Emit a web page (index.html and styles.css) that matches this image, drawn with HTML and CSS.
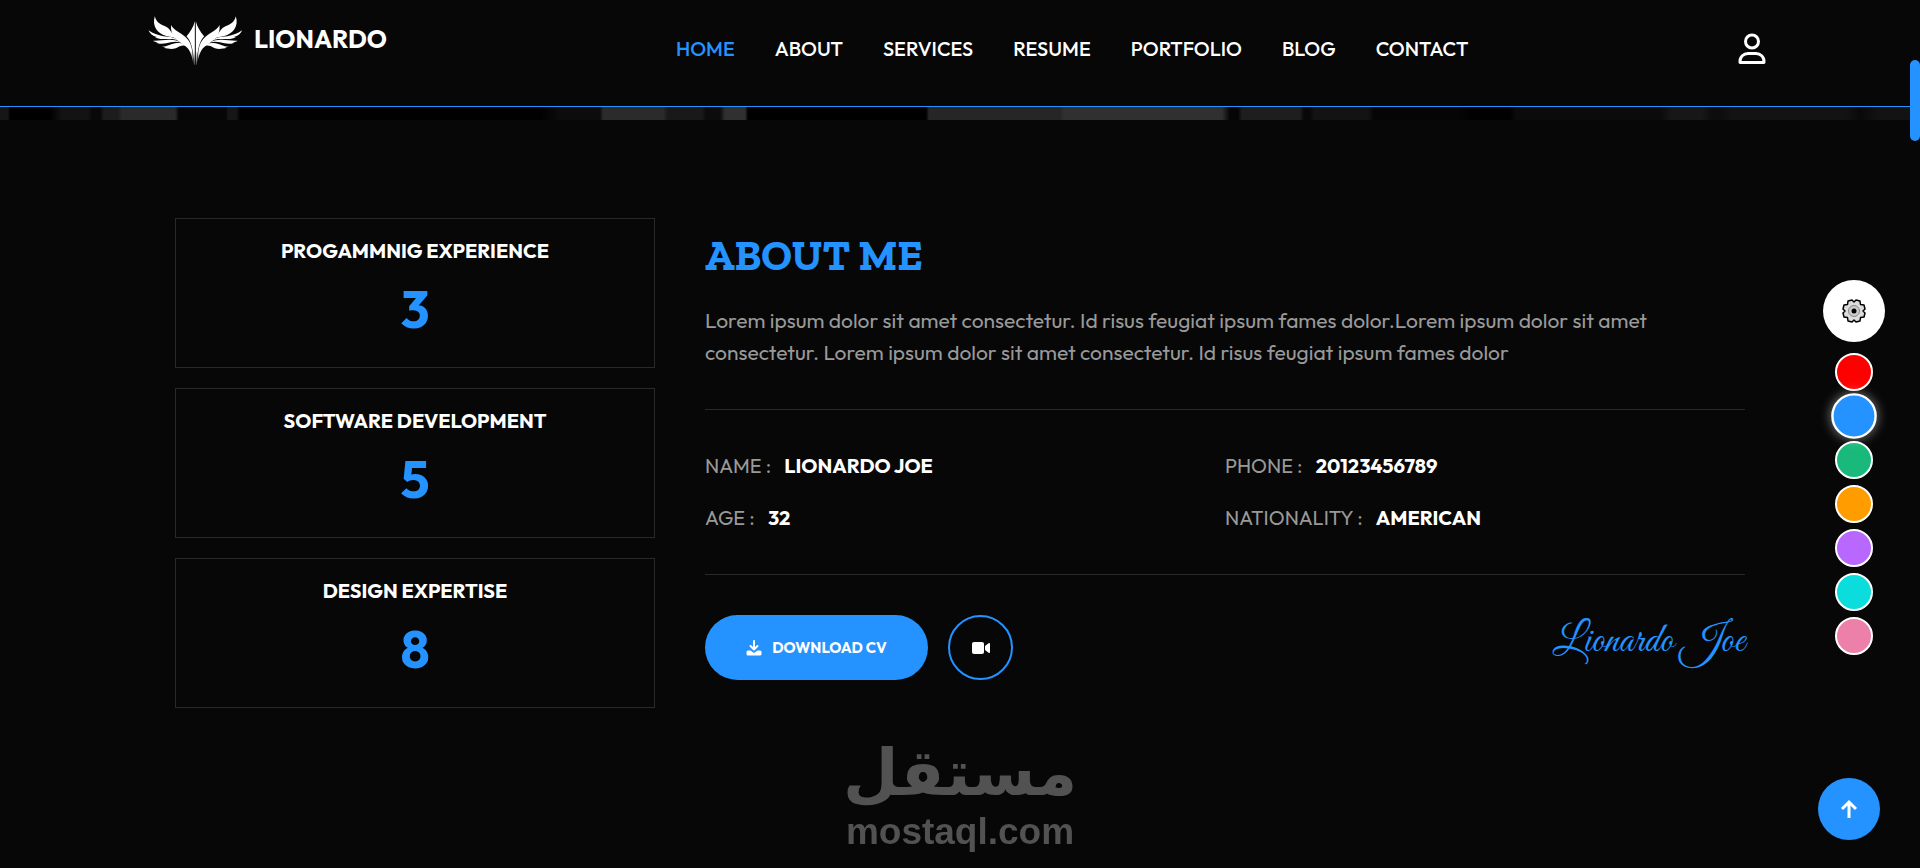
FILE: index.html
```html
<!DOCTYPE html>
<html lang="en">
<head>
  <meta charset="UTF-8">
  <meta name="viewport" content="width=device-width, initial-scale=1.0">
  <title>Lionardo</title>
  <link rel="stylesheet" href="styles.css">
</head>
<body>
  <header class="header">
    <div class="header-inner">
      <a href="#" class="logo">
        <svg class="logo-icon" viewBox="52 50 284 150" aria-hidden="true">
          <defs>
            <linearGradient id="fade" x1="0" y1="50" x2="0" y2="200" gradientUnits="userSpaceOnUse">
              <stop offset="0.7" stop-color="#fff"/>
              <stop offset="1" stop-color="#fff" stop-opacity="0.2"/>
            </linearGradient>
            <g id="wing">
              <path d="M72 51C76 68 88 76 103 81C115 86 118 95 125 103C137 112 145 118 153 128C136 112 121 114 104 109C83 104 62 83 72 51Z"/>
              <path d="M53 93C67 103 81 108 98 111C119 113 130 113 141 123C124 116 113 120 98 119C84 119 80 116 72 115L78 113C65 111 57 103 53 93Z"/>
              <path d="M67 124C88 125 107 119 125 122C137 122 143 126 150 130C132 124 119 130 106 132C89 135 81 132 76 130L82 129C75 128 70 127 67 124Z"/>
              <path d="M93 142C111 142 121 132 139 131C155 130 169 134 176 145C159 135 151 138 141 144C128 152 111 148 99 145L105 144Z"/>
              <path d="M121 77C129 94 148 99 163 112C181 128 185 144 187 190C181 157 173 145 155 134C139 123 117 110 121 77Z"/>
              <path d="M192 66C188 83 178 98 167 111C181 127 187 146 189 196L192 196Z"/>
            </g>
          </defs>
          <g fill="url(#fade)">
            <use href="#wing"/>
            <use href="#wing" transform="translate(387 0) scale(-1 1)"/>
          </g>
        </svg>
        <span>LIONARDO</span>
      </a>

      <nav class="nav">
        <a href="#" class="active">HOME</a>
        <a href="#about">ABOUT</a>
        <a href="#">SERVICES</a>
        <a href="#">RESUME</a>
        <a href="#">PORTFOLIO</a>
        <a href="#">BLOG</a>
        <a href="#">CONTACT</a>
      </nav>

      <a href="#" class="user" aria-label="Account">
        <svg width="28" height="32" viewBox="0 0 28 32" fill="none" stroke="#fff" stroke-width="3">
          <circle cx="14" cy="8.500" r="6.500"/>
          <path d="M2 29.500C1.500 23.500 6 20.500 10 20.500H18C22 20.500 26.500 23.500 26 29.500Z" stroke-linejoin="round"/>
        </svg>
      </a>
    </div>
  </header>

  <main>
    <div class="hero-strip"></div>

    <section class="about" id="about">
      <div class="stats">
        <div class="stat">
          <h3>PROGAMMNIG EXPERIENCE</h3>
          <p>3</p>
        </div>
        <div class="stat">
          <h3>SOFTWARE DEVELOPMENT</h3>
          <p>5</p>
        </div>
        <div class="stat">
          <h3>DESIGN EXPERTISE</h3>
          <p>8</p>
        </div>
      </div>

      <div class="about-text">
        <h2>ABOUT ME</h2>
        <p class="intro">Lorem ipsum dolor sit amet consectetur. Id risus feugiat ipsum fames dolor.Lorem ipsum dolor sit amet consectetur. Lorem ipsum dolor sit amet consectetur. Id risus feugiat ipsum fames dolor</p>

        <ul class="info">
          <li>NAME : <strong>LIONARDO JOE</strong></li>
          <li>PHONE : <strong>20123456789</strong></li>
          <li>AGE : <strong>32</strong></li>
          <li>NATIONALITY : <strong>AMERICAN</strong></li>
        </ul>

        <div class="actions">
          <button type="button" class="btn-download">
            <svg width="16" height="16" viewBox="0 0 16 16" aria-hidden="true">
              <path d="M8 1V9M4.500 6L8 9.500L11.500 6" fill="none" stroke="#fff" stroke-width="2" stroke-linecap="round" stroke-linejoin="round"/>
              <path d="M2 10.500H4.500L8 13L11.500 10.500H14A1.500 1.500 0 0 1 15.500 12V14A1.500 1.500 0 0 1 14 15.500H2A1.500 1.500 0 0 1 .5 14V12A1.500 1.500 0 0 1 2 10.500Z" fill="#fff"/>
            </svg>
            DOWNLOAD CV
          </button>
          <button type="button" class="btn-video" aria-label="Play video">
            <svg width="18" height="12" viewBox="0 0 18 12" fill="#fff">
              <rect width="12" height="12" rx="2"/>
              <path d="M13 4L16.500 1.200Q18 .5 18 2V10Q18 11.500 16.500 10.800L13 8Z"/>
            </svg>
          </button>
          <span class="signature">Lionardo Joe</span>
        </div>
      </div>
    </section>
  </main>

  <div class="watermark">
    <span class="watermark-ar" lang="ar" dir="rtl">مستقل</span>
    <span class="watermark-en">mostaql.com</span>
  </div>

  <aside class="theme">
    <button type="button" class="theme-toggle" aria-label="Settings">
      <svg width="24" height="24" viewBox="0 0 24 24">
        <path d="M10 1L12 3L14 1L18 2L18.500 5.500L22 6L23 10L21 12L23 14L22 18L18.500 18.500L18 22L14 23L12 21L10 23L6 22L5.500 18.500L2 18L1 14L3 12L1 10L2 6L5.500 5.500L6 2Z" fill="#ddd" stroke="#000" stroke-width="1.500" stroke-linejoin="round"/>
        <circle cx="12" cy="12" r="5.500" fill="#ccc" stroke="#888"/>
        <circle cx="12" cy="12" r="2.500"/>
      </svg>
    </button>
    <div class="colors">
      <button type="button" class="color red" aria-label="Red"></button>
      <button type="button" class="color blue selected" aria-label="Blue"></button>
      <button type="button" class="color green" aria-label="Green"></button>
      <button type="button" class="color orange" aria-label="Orange"></button>
      <button type="button" class="color purple" aria-label="Purple"></button>
      <button type="button" class="color cyan" aria-label="Cyan"></button>
      <button type="button" class="color pink" aria-label="Pink"></button>
    </div>
  </aside>

  <a href="#" class="to-top" aria-label="Back to top">
    <svg width="18" height="20" viewBox="0 0 18 20" fill="none" stroke="#fff" stroke-width="3">
      <path d="M9 19V3M2 10L9 3L16 10"/>
    </svg>
  </a>

  <div class="scrollbar"><div class="scrollbar-thumb"></div></div>
</body>
</html>
```
FILE: styles.css
```css
:root {
  --main: #2492ff;
  --bg: #070707;
  --line: #292929;
}

* { margin: 0; padding: 0; box-sizing: border-box; }

body {
  background-color: var(--bg);
  color: #fff;
  font-family: Outfit, Lato, sans-serif;
  font-size: 20px;
  line-height: 32px;
}
a { color: inherit; text-decoration: none; }
button { border: none; font: inherit; color: #fff; cursor: pointer; }
svg { display: block; flex: none; }

/* header */
.header {
  position: sticky;
  top: 0;
  z-index: 10;
  background-color: var(--bg);
  border-bottom: 1px solid var(--main);
}
.header-inner {
  display: grid;
  grid-template-columns: 528px 1fr auto;
  max-width: 1624px;
  height: 106px;
  margin: 0 auto;
  padding-top: 16px;
}
.logo {
  display: flex;
  gap: 11px;
  align-self: start;
  font-size: 25px;
  font-weight: 700;
  line-height: 46px;
}
.logo-icon { width: 95px; height: 50px; }
.nav {
  display: flex;
  gap: 40px;
  padding-top: 17px;
  font-weight: 500;
}
.nav .active { color: var(--main); }
.user { padding-top: 17px; margin-right: 6px; }

/* bottom edge of the hero picture */
.hero-strip {
  height: 13px;
  background: linear-gradient(90deg,
    #161616 0 8px, #000 10px 50px, #131313 62px 88px, #080808 92px 100px,
    #1c1c1c 104px 118px, #2a2a2a 122px 175px, #060606 179px 226px,
    #161616 228px 236px, #010101 240px 540px, #0c0c0c 560px 600px,
    #2b2b2b 603px 663px, #191919 668px 702px, #0c0c0c 706px 720px,
    #303030 725px 745px, #000 748px 926px, #262626 929px 1060px,
    #303030 1064px 1222px, #050505 1230px 1238px, #1e1e1e 1242px 1300px,
    #080808 1304px 1310px, #131313 1314px 1368px, #050505 1374px 1460px,
    #010101 1470px 1510px, #0b0b0b 1516px 1660px, #171717 1672px 1702px,
    #0d0d0d 1712px 1720px, #131313 1732px 1846px, #090909 1860px, #131313 1880px);
}

/* about */
.about {
  display: grid;
  grid-template-columns: 480px 1fr;
  gap: 50px;
  max-width: 1570px;
  margin: 0 auto;
  padding: 98px 0 40px;
}
.stats { display: flex; flex-direction: column; gap: 20px; }
.stat {
  height: 150px;
  padding-top: 16px;
  border: 1px solid var(--line);
  text-align: center;
}
.stat h3 { font-size: 20px; font-weight: 700; }
.stat p {
  color: var(--main);
  font-size: 52px;
  font-weight: 700;
  line-height: 84px;
}
.about-text h2 {
  padding-top: 12px;
  color: var(--main);
  font-family: "Zilla Slab", Rokkitt, Arvo, "DejaVu Serif Condensed", serif;
  font-size: 43px;
  line-height: 50px;
}
.intro { max-width: 980px; padding: 24px 0 41px; color: #999; font-size: 21px; }
.info {
  display: grid;
  grid-template-columns: 1fr 1fr;
  row-gap: 20px;
  padding: 40px 0;
  border: solid var(--line);
  border-width: 1px 0;
  color: #999;
  list-style: none;
}
.info strong { margin-left: 9px; color: #fff; }
.actions { display: flex; gap: 20px; padding-top: 40px; }
.btn-download {
  display: flex;
  align-items: center;
  justify-content: center;
  gap: 10px;
  width: 223px;
  height: 65px;
  border-radius: 33px;
  background-color: var(--main);
  font-size: 15px;
  font-weight: 700;
}
.btn-video {
  display: grid;
  place-items: center;
  width: 65px;
  height: 65px;
  border: 2px solid var(--main);
  border-radius: 50%;
  background: none;
}
.signature {
  margin-left: auto;
  color: var(--main);
  font-family: "Great Vibes", "Liberation Serif", cursive;
  font-size: 41px;
  line-height: 54px;
}

/* watermark */
.watermark {
  position: fixed;
  bottom: 14px;
  left: 0;
  right: 0;
  display: flex;
  flex-direction: column;
  align-items: center;
  color: #525252;
  font-weight: 700;
}
.watermark-ar { font-family: "DejaVu Sans", sans-serif; font-size: 64px; line-height: 74px; }
.watermark-en { font-family: "Liberation Sans", sans-serif; font-size: 37px; line-height: 44px; }

/* colour switcher */
.theme {
  position: fixed;
  top: 280px;
  right: 35px;
  display: flex;
  flex-direction: column;
  align-items: center;
  gap: 11px;
}
.theme-toggle {
  display: grid;
  place-items: center;
  width: 62px;
  height: 62px;
  border-radius: 50%;
  background-color: #fff;
}
.colors { display: flex; flex-direction: column; gap: 6px; }
.color { width: 38px; height: 38px; border: 2px solid #fff; border-radius: 50%; }
.selected { transform: scale(1.2); box-shadow: 0 0 10px rgba(255, 255, 255, 0.5); }
.red { background-color: #f00; }
.blue { background-color: #2492ff; }
.green { background-color: #19b97b; }
.orange { background-color: #ff9d00; }
.purple { background-color: #b867ff; }
.cyan { background-color: #0bdcdc; }
.pink { background-color: #ed80a9; }

.to-top {
  position: fixed;
  right: 40px;
  bottom: 28px;
  display: grid;
  place-items: center;
  width: 62px;
  height: 62px;
  border-radius: 50%;
  background-color: var(--main);
}

.scrollbar {
  position: fixed;
  top: 0;
  right: 0;
  bottom: 0;
  z-index: 20;
  width: 10px;
  padding-top: 60px;
  background-color: var(--bg);
}
.scrollbar-thumb { height: 81px; border-radius: 5px; background-color: var(--main); }
```
